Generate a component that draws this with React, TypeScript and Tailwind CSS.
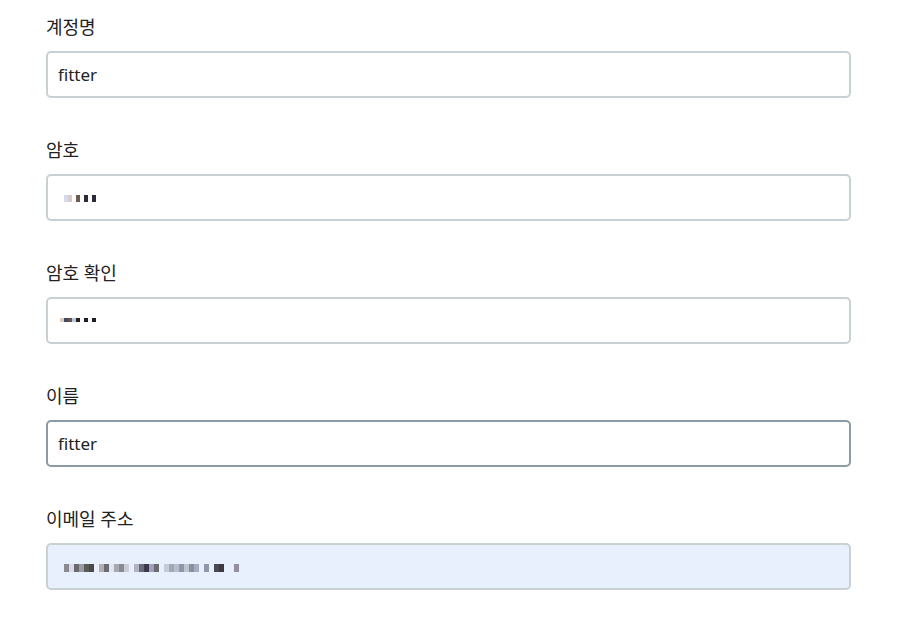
const font = { fontFamily: '"Noto Sans", "Noto Sans CJK KR", sans-serif' };

type Block = [number, string];

// pixelated (mosaic) values as in the screenshot
const pw1: Block[] = [
  [4, "#d4dcf0"],
  [4, "#dccbc8"],
  [4, "#ffffff"],
  [4, "#6b5a55"],
  [4, "#ffffff"],
  [4, "#2a2a38"],
  [4, "#ffffff"],
  [4, "#2a2a3a"],
];

const pw2: Block[] = [
  [4, "#dccbbd"],
  [4, "#3f4a66"],
  [4, "#6a5448"],
  [4, "#b8c8de"],
  [4, "#2a1e1e"],
  [4, "#ffffff"],
  [4, "#1e1e28"],
  [4, "#ffffff"],
  [4, "#1e1e28"],
];

const email: Block[] = [
  [5, "#8a8a90"], [5, "#d8dcea"], [5, "#6a6a6a"], [5, "#9a9aa0"], [5, "#5a5a5a"], [5, "#4a4a4a"],
  [5, "#e8f0fe"], [5, "#b0b0b4"], [5, "#6a6a70"], [5, "#e0e4f0"], [5, "#a8a8b0"], [5, "#8a8a90"],
  [5, "#c8ccd8"], [5, "#e8f0fe"], [5, "#b0b4c0"], [5, "#6a6a80"], [5, "#3a3a48"], [5, "#a0a0c0"],
  [5, "#6a6a70"], [5, "#e8f0fe"], [5, "#c8ccd8"], [5, "#a0a8b8"], [5, "#b8bcd0"], [5, "#9098a8"],
  [5, "#c0c4d0"], [5, "#8890a0"], [5, "#a8acc0"], [5, "#e8f0fe"], [5, "#9098a8"], [5, "#e8f0fe"],
  [5, "#4a4a50"], [5, "#3a3a40"], [5, "#e8f0fe"], [5, "#e8f0fe"], [5, "#9090a0"], [4, "#e8f0fe"],
];

function Mosaic({ blocks, h }: { blocks: Block[]; h: string }) {
  return (
    <div className={`flex ${h}`}>
      {blocks.map(([w, c], i) => (
        <span key={i} style={{ width: w, backgroundColor: c }} />
      ))}
    </div>
  );
}

type FieldProps = {
  label: string;
  children: React.ReactNode;
  focused?: boolean;
  autofill?: boolean;
};

function Field({ label, children, focused, autofill }: FieldProps) {
  return (
    <div className="mb-[40px]">
      <div className="mb-[12px] h-6 text-[18px] leading-6 text-[#222]">{label}</div>
      <div
        className={`flex h-[47px] items-center rounded-[5px] border-2 px-[10px] text-[17px] text-[#222] ${
          focused ? "border-[#8d9ba5]" : "border-[#c9d0d4]"
        } ${autofill ? "bg-[#e8f0fe]" : "bg-white"}`}
      >
        {children}
      </div>
    </div>
  );
}

export default function App() {
  return (
    <div className="min-h-[626px] bg-white pl-[46px] pr-[48px] pt-[15px]" style={font}>
      <Field label="계정명">
        <span>fitter</span>
      </Field>
      <Field label="암호">
        <div className="ml-[6px] mt-[1px]">
          <Mosaic blocks={pw1} h="h-[7px]" />
        </div>
      </Field>
      <Field label="암호 확인">
        <div className="ml-[2px] -mt-[1px]">
          <Mosaic blocks={pw2} h="h-[4px]" />
        </div>
      </Field>
      <Field label="이름" focused>
        <span>fitter</span>
      </Field>
      <Field label="이메일 주소" autofill>
        <div className="ml-[6px] mt-[2px]">
          <Mosaic blocks={email} h="h-[8px]" />
        </div>
      </Field>
    </div>
  );
}
